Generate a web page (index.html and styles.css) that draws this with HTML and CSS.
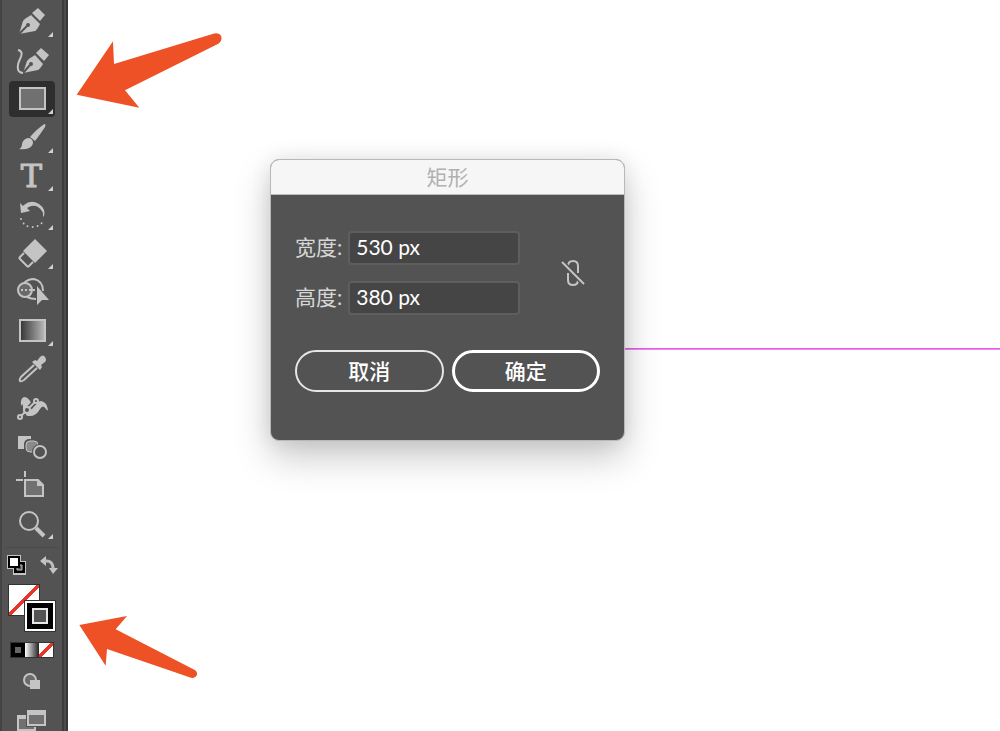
FILE: index.html
```html
<!DOCTYPE html>
<html lang="zh-CN">
<head>
    <meta charset="UTF-8">
    <meta name="viewport" content="width=device-width, initial-scale=1.0">
    <title>矩形</title>
    <link rel="stylesheet" href="styles.css">
</head>
<body>
    <aside class="toolbar">
        <div class="tools">
            <button type="button" class="tool more" aria-label="钢笔工具">
                <svg viewBox="0 0 46 36">
                    <path class="solid" d="M29 4l7 7-5 6-8-8z"/>
                    <path class="solid" d="M10 30l4-13q1-2 8-6l9 9q-3 6-5 7z"/>
                    <path class="cut" d="M10 30l8-8"/>
                    <circle class="hole" cx="19" cy="21" r="2"/>
                </svg>
            </button>
            <button type="button" class="tool" aria-label="曲率工具">
                <svg viewBox="0 0 46 36">
                    <path class="solid" d="M32 5l8 7-5 6-8-8z"/>
                    <path class="solid" d="M14 30l4-12q1-2 8-6l8 9q-3 5-5 6z"/>
                    <path class="cut" d="M14 30l7-8"/>
                    <circle class="hole" cx="22" cy="21" r="2"/>
                    <path class="line" d="M9 7c5 1 4 5 2 9s-5 13 3 14"/>
                </svg>
            </button>
            <button type="button" class="tool more selected" aria-label="矩形工具">
                <svg viewBox="0 0 46 36">
                    <rect class="box" x="11" y="7" width="25" height="21"/>
                </svg>
            </button>
            <button type="button" class="tool more" aria-label="画笔工具">
                <svg viewBox="0 0 46 36">
                    <path class="solid" d="M36 4q1 1 0 3-6 9-10 14l-5-4q7-8 13-12 1-1 2-1z"/>
                    <path class="solid" d="M19 18q4 0 5 4 0 4-4 6-4 2-10 1 3-1 3-5 1-5 6-6z"/>
                </svg>
            </button>
            <button type="button" class="tool more" aria-label="文字工具">
                <span class="type-letter">T</span>
            </button>
            <button type="button" class="tool more" aria-label="旋转工具">
                <svg viewBox="0 0 46 36">
                    <path class="solid" d="M11 6l1 10 9-2-3-3q6-4 11-1 6 4 5 10l1-1q2-7-5-12-8-5-15 1l-1 1z"/>
                    <path class="dots" d="M12 22q3 8 11 8 8 0 12-7"/>
                </svg>
            </button>
            <button type="button" class="tool more" aria-label="橡皮擦工具">
                <svg viewBox="0 0 46 36">
                    <path class="solid" d="M26 3l12 12-12 12-12-12z"/>
                    <path class="line" d="M15 17l-4 4q-1 1 0 2l7 7q1 1 2 0l4-4"/>
                </svg>
            </button>
            <button type="button" class="tool" aria-label="形状生成器工具">
                <svg viewBox="0 0 46 36">
                    <circle class="thin" cx="16" cy="16" r="7"/>
                    <path class="line" d="M15 9q4-4 10-4 9 2 9 12M18 23q4 2 9 2"/>
                    <path class="thin dashed" d="M12 16h16"/>
                    <path class="solid" d="M28 12l12 14h-7l-5 5z"/>
                </svg>
            </button>
            <button type="button" class="tool more" aria-label="渐变工具">
                <svg viewBox="0 0 46 36">
                    <defs>
                        <linearGradient id="ramp">
                            <stop offset="0" stop-color="#333"/>
                            <stop offset="1" stop-color="#bbb"/>
                        </linearGradient>
                    </defs>
                    <rect x="11" y="7" width="25" height="21" fill="url(#ramp)" stroke="#c4c4c4" stroke-width="2"/>
                </svg>
            </button>
            <button type="button" class="tool" aria-label="吸管工具">
                <svg viewBox="0 0 46 36">
                    <path class="line" d="M25 14L12 26q-2 3-1 4t4-1l13-12"/>
                    <path class="solid" d="M23 11l3-2 2 1 3-4q3-3 5 0t0 5l-4 3 1 2-2 3z"/>
                </svg>
            </button>
            <button type="button" class="tool" aria-label="操控变形工具">
                <svg viewBox="0 0 46 36">
                    <path class="solid" d="M12 16q-1-9 4-9 6 1 7 12 5-8 9-8 6 1 7 9-1 1-2-1-3-5-6 0-4 8-12 7-6-1-5-9 0-5-2-1z"/>
                    <path class="cut wide" d="M13 25l13-13"/>
                    <path class="line" d="M12 26l14-14"/>
                    <circle class="ring" cx="11" cy="27" r="2"/>
                    <circle class="ring" cx="18" cy="20" r="3"/>
                    <circle class="ring" cx="27" cy="11" r="2"/>
                </svg>
            </button>
            <button type="button" class="tool" aria-label="混合工具">
                <svg viewBox="0 0 46 36">
                    <rect class="solid" x="9" y="7" width="13" height="13"/>
                    <rect class="hole" x="15" y="10" width="16" height="15" rx="5"/>
                    <rect class="middle" x="17" y="12" width="12" height="11" rx="4"/>
                    <circle class="hole" cx="31" cy="23" r="8"/>
                    <circle class="line" cx="31" cy="23" r="6"/>
                </svg>
            </button>
            <button type="button" class="tool" aria-label="画板工具">
                <svg viewBox="0 0 46 36">
                    <path class="line" d="M7 13h7M16 4v6"/>
                    <path class="box" d="M16 13h13l5 5v11H16z"/>
                    <path class="solid" d="M28 13v6h6z"/>
                </svg>
            </button>
            <button type="button" class="tool more" aria-label="缩放工具">
                <svg viewBox="0 0 46 36">
                    <circle class="line" cx="20" cy="15" r="9"/>
                    <path class="handle" d="M27 22l8 8"/>
                </svg>
            </button>
        </div>

        <div class="color-actions">
            <button type="button" aria-label="默认填色和描边">
                <svg width="20" height="20" viewBox="0 0 20 20">
                    <path fill="#c4c4c4" d="M0 0h14v6h5v14H6v-6H0z"/>
                    <path fill="#000" d="M7 7h11v11H7z"/>
                    <path fill="#535353" stroke="#c4c4c4" d="M10 10h5v5h-5z"/>
                    <path fill="#fff" stroke="#000" stroke-width="2" d="M2 2h10v10H2z"/>
                </svg>
            </button>
            <button type="button" aria-label="互换填色和描边">
                <svg width="18" height="18" viewBox="0 0 18 18">
                    <path class="solid" d="M0 5l6-5v10zM9 12h9l-5 6z"/>
                    <path fill="none" stroke="#bdbdbd" stroke-width="3" d="M5 5q8-1 8 8"/>
                </svg>
            </button>
        </div>

        <div class="swatches">
            <button type="button" class="swatch fill" aria-label="填色"></button>
            <button type="button" class="swatch stroke" aria-label="描边"></button>
        </div>

        <div class="modes">
            <button type="button" class="mode solid-mode" aria-label="颜色"></button>
            <button type="button" class="mode gradient-mode" aria-label="渐变"></button>
            <button type="button" class="mode none-mode" aria-label="无"></button>
        </div>

        <button type="button" class="drawing-mode" aria-label="绘图模式">
            <svg width="18" height="17" viewBox="0 0 18 17">
                <circle class="thin" cx="7" cy="7" r="6"/>
                <path class="solid" d="M7 7h10v9H7z"/>
            </svg>
        </button>
        <button type="button" class="screen-mode" aria-label="更改屏幕模式">
            <svg width="30" height="24" viewBox="0 0 30 24">
                <path class="box" d="M1 6h17v14H1z"/>
                <path class="solid" d="M0 5h18v4H0z"/>
                <path class="hole" d="M9 0h21v17H9z"/>
                <path class="box" d="M11 1h17v14H11z"/>
                <path class="solid" d="M10 0h19v5H10z"/>
                <path class="solid" d="M17 17h2v4h-2z"/>
            </svg>
        </button>
    </aside>

    <main class="canvas">
        <div class="guide"></div>

        <svg class="arrow arrow-top" width="160" height="100" viewBox="0 0 480 300">
            <path d="M20 224L129 64l3 68L430 41q18-4 24 9 3 12-9 21L165 211l43 52z"/>
        </svg>
        <svg class="arrow arrow-bottom" width="140" height="90" viewBox="0 0 420 270">
            <path d="M28 75l143-27-34 40 236 121q10 6 8 16-5 11-18 8L111 147l-4 50z"/>
        </svg>

        <form class="dialog">
            <h1 class="dialog-title">矩形</h1>
            <div class="dialog-body">
                <div class="size">
                    <div class="fields">
                        <div class="field">
                            <label for="width">宽度:</label>
                            <input type="text" id="width" value="530 px">
                        </div>
                        <div class="field">
                            <label for="height">高度:</label>
                            <input type="text" id="height" value="380 px">
                        </div>
                    </div>
                    <button type="button" class="link" aria-label="约束宽度和高度比例">
                        <svg width="26" height="28" viewBox="0 0 26 28">
                            <path d="M8 7q0-5 5-5t5 5v7M18 21q0 5-5 5t-5-5v-7"/>
                            <path class="gap" d="M4 5l18 18"/>
                            <path d="M2 3l22 22"/>
                        </svg>
                    </button>
                </div>
                <div class="actions">
                    <button type="button">取消</button>
                    <button type="submit" class="primary">确定</button>
                </div>
            </div>
        </form>
    </main>
</body>
</html>
```
FILE: styles.css
```css
* {
    box-sizing: border-box;
}

body {
    margin: 0;
    display: flex;
    height: 100vh;
    overflow: hidden;
    background-color: #fff;
    font-family: Lato, "Noto Sans CJK SC", sans-serif;
}

button {
    padding: 0;
    border: none;
    background: none;
    color: inherit;
    font-family: inherit;
}

svg {
    display: block;
}

/* Barra de herramientas */
.toolbar {
    flex: none;
    display: flex;
    flex-direction: column;
    align-items: center;
    width: 68px;
    padding: 4px 10px 0 5px;
    border-left: 2px solid #444;
    border-right: 2px solid #383838;
    background: linear-gradient(to left, #4c4c4c 2px, #3c3c3c 2px, #3c3c3c 4px, #535353 4px);
    overflow: hidden;
}

.toolbar > * {
    flex: none;
}

.tools {
    display: flex;
    flex-direction: column;
    justify-content: space-between;
    height: 538px;
}

.tool {
    position: relative;
    width: 46px;
    height: 36px;
    border-radius: 4px;
}

.tool svg {
    width: 46px;
    height: 36px;
}

.tool.selected {
    background-color: #2e2e2e;
}

/* Triangulo de la esquina: hay mas herramientas */
.tool.more::after {
    content: "";
    position: absolute;
    right: 2px;
    bottom: 3px;
    border-left: 5px solid transparent;
    border-bottom: 5px solid #d0d0d0;
}

.type-letter {
    display: block;
    color: #c4c4c4;
    font: 32px/36px "DejaVu Serif", serif;
    -webkit-text-stroke: 1px #c4c4c4;
}

.solid {
    fill: #c4c4c4;
}

.hole {
    fill: #535353;
}

.box {
    fill: #707070;
    stroke: #c4c4c4;
    stroke-width: 2;
}

.line,
.thin,
.dots,
.cut,
.handle {
    fill: none;
    stroke: #c4c4c4;
    stroke-width: 2;
}

.thin {
    fill: #6a6a6a;
}

.cut {
    stroke: #535353;
}

.cut.wide {
    stroke-width: 5;
}

.dots {
    stroke-linecap: round;
    stroke-dasharray: 0 5;
}

.dashed {
    stroke-dasharray: 2 2;
}

.ring {
    fill: #535353;
    stroke: #c4c4c4;
    stroke-width: 2;
}

.middle {
    fill: #8a8a8a;
    stroke: #c4c4c4;
}

.handle {
    stroke-width: 4;
}

/* Colores */
.color-actions {
    display: flex;
    justify-content: space-between;
    align-items: center;
    width: 53px;
    margin-top: 5px;
    padding: 7px 0 0 2px;
    border-top: 1px solid #4a4a4a;
}

.swatches {
    position: relative;
    width: 48px;
    height: 48px;
    margin-top: 9px;
}

.swatch {
    position: absolute;
    width: 32px;
    height: 32px;
    border: 1px solid #333;
}

.swatch.fill {
    top: 0;
    left: 0;
    background: linear-gradient(to bottom right, #fff 46%, #e8352b 46%, #e8352b 54%, #fff 54%);
}

.swatch.stroke {
    right: 0;
    bottom: 0;
    background-color: #000;
    box-shadow: inset 0 0 0 2px #fff;
}

.swatch.stroke::after {
    content: "";
    position: absolute;
    inset: 7px;
    border: 2px solid #e8e8e8;
    background-color: #535353;
}

.modes {
    display: flex;
    margin-top: 10px;
    border: 1px solid #333;
}

.mode {
    width: 14px;
    height: 14px;
}

.solid-mode {
    border: 4px solid #000;
    background-color: #666;
}

.gradient-mode {
    background: linear-gradient(to right, #fff, #222);
}

.none-mode {
    background: linear-gradient(to bottom right, #fff 40%, #e8352b 40%, #e8352b 60%, #fff 60%);
}

.drawing-mode {
    margin-top: 15px;
}

.screen-mode {
    margin-top: 20px;
}

/* Mesa de trabajo */
.canvas {
    position: relative;
    flex: 1;
}

.guide {
    position: absolute;
    top: 348px;
    left: 556px;
    right: 0;
    height: 2px;
    background: linear-gradient(#e04ae6, #f0a0f2);
}

.arrow {
    position: absolute;
    left: 2px;
    fill: #ee5125;
}

.arrow-top {
    top: 20px;
}

.arrow-bottom {
    top: 600px;
}

/* Cuadro de dialogo */
.dialog {
    position: absolute;
    top: 159px;
    left: 202px;
    width: 355px;
    border: 1px solid #b8b8b8;
    border-radius: 9px;
    background-color: #535353;
    box-shadow: 0 16px 36px rgba(0, 0, 0, 0.22), 0 0 20px rgba(0, 0, 0, 0.08);
    color: #d6d6d6;
    overflow: hidden;
}

.dialog-title {
    margin: 0;
    border-bottom: 1px solid #bbb;
    background-color: #f6f6f6;
    color: #b0b0b0;
    font-size: 21px;
    font-weight: normal;
    line-height: 34px;
    text-align: center;
}

.dialog-body {
    padding: 36px 24px 48px;
}

.size {
    display: flex;
    align-items: center;
    justify-content: space-between;
}

.fields {
    display: grid;
    gap: 16px;
}

.field {
    display: flex;
    align-items: center;
    gap: 6px;
    font-size: 21px;
    line-height: 32px;
}

.field label {
    padding-bottom: 2px;
}

.field input {
    width: 172px;
    height: 34px;
    padding: 0 6px 3px;
    border: 2px solid #5e5e5e;
    border-radius: 4px;
    background-color: #454545;
    color: #fff;
    font-family: inherit;
    font-size: 21px;
}

.link {
    margin-right: 14px;
}

.link path {
    fill: none;
    stroke: #c4c4c4;
    stroke-width: 2;
}

.link .gap {
    stroke: #535353;
    stroke-width: 5;
}

.actions {
    display: grid;
    grid-template-columns: 1fr 1fr;
    gap: 8px;
    margin-top: 35px;
}

.actions button {
    height: 42px;
    padding-bottom: 2px;
    border: 2px solid #e6e6e6;
    border-radius: 21px;
    color: #fff;
    font-size: 21px;
    font-weight: 500;
}

.actions .primary {
    border: 3px solid #fff;
}
```
